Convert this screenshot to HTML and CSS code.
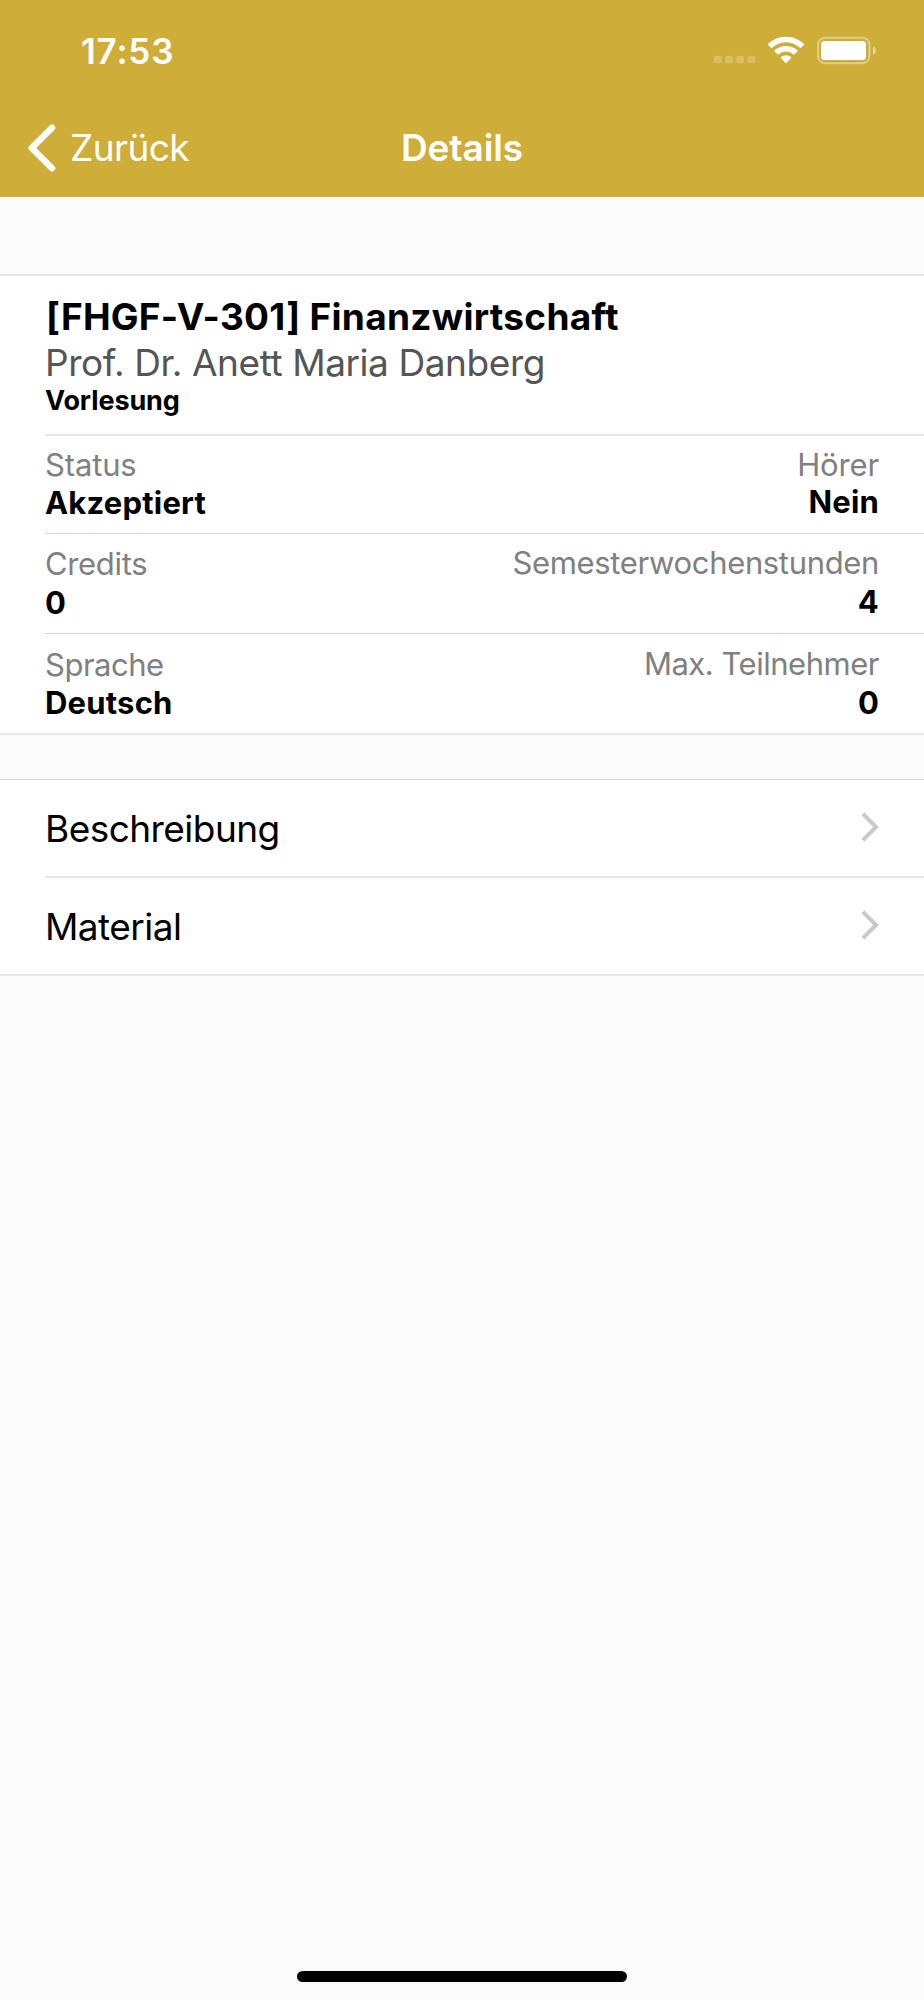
FILE: index.html
```html
<!DOCTYPE html>
<html lang="de">
<head>
<meta charset="utf-8">
<title>Details</title>
<link rel="stylesheet" href="styles.css">
</head>
<body>
<div class="screen">
  <header class="header">
    <div class="statusbar">
      <span class="time">17:53</span>
      <svg class="indicators" width="164" height="30" viewBox="0 0 164 30">
        <g fill="#fff" fill-opacity="0.22">
          <rect x="2" y="20.7" width="7.8" height="7.6" rx="2"/>
          <rect x="13" y="20.7" width="7.8" height="7.6" rx="2"/>
          <rect x="24.2" y="20.7" width="7.8" height="7.6" rx="2"/>
          <rect x="35.4" y="20.7" width="7.8" height="7.6" rx="2"/>
        </g>
        <g fill="#fff">
          <path d="M74 1.7C81 1.7 87.400 4.500 91.800 8.700Q92.400 9.400 91.800 10L89 12.800Q88.400 13.300 87.800 12.800C84.200 9.400 79.300 7.300 74 7.300S63.800 9.400 60.200 12.800Q59.600 13.300 59 12.800L56.200 10Q55.600 9.400 56.200 8.700C60.600 4.500 67 1.700 74 1.700Z"/>
          <path d="M74 10.900C78.500 10.900 82.500 12.600 85.400 15.300Q86 15.900 85.400 16.500L82.500 19.300Q81.900 19.800 81.300 19.300C79.400 17.500 76.800 16.400 74 16.400S68.600 17.500 66.700 19.300Q66.100 19.800 65.500 19.300L62.600 16.500Q62 15.900 62.600 15.300C65.500 12.600 69.500 10.900 74 10.900Z"/>
          <path d="M74 20.200C76 20.200 77.700 20.900 79 22Q79.500 22.500 79 23.100L74.500 27.900Q74 28.400 73.500 27.900L69 23.100Q68.500 22.500 69 22C70.300 20.900 72 20.200 74 20.200Z"/>
          <rect x="109" y="6" width="45" height="19" rx="3.500"/>
          <path fill-opacity="0.5" d="M161 11.300Q164 12.700 164 15.500T161 19.700Z"/>
        </g>
        <rect x="106" y="2.700" width="51.500" height="25.500" rx="7" fill="none" stroke="#fff" stroke-opacity="0.4" stroke-width="2"/>
      </svg>
    </div>
    <nav class="navbar">
      <a class="back">
        <svg width="28" height="48" viewBox="0 0 28 48"><path d="M24 3.700L3.700 24L24 44.300" fill="none" stroke="#fff" stroke-width="6.400" stroke-linecap="round" stroke-linejoin="round"/></svg>
        <span>Zurück</span>
      </a>
      <h1 class="nav-title">Details</h1>
    </nav>
  </header>

  <main class="content">
    <section class="group course">
      <div class="course-head">
        <h2 class="course-title">[FHGF-V-301] Finanzwirtschaft</h2>
        <p class="lecturer">Prof. Dr. Anett Maria Danberg</p>
        <p class="kind">Vorlesung</p>
      </div>
      <dl class="facts status">
        <div class="fact"><dt>Status</dt><dd>Akzeptiert</dd></div>
        <div class="fact end"><dt>Hörer</dt><dd>Nein</dd></div>
      </dl>
      <dl class="facts credits">
        <div class="fact"><dt>Credits</dt><dd>0</dd></div>
        <div class="fact end"><dt>Semesterwochenstunden</dt><dd>4</dd></div>
      </dl>
      <dl class="facts language">
        <div class="fact"><dt>Sprache</dt><dd>Deutsch</dd></div>
        <div class="fact end"><dt>Max. Teilnehmer</dt><dd>0</dd></div>
      </dl>
    </section>

    <section class="group links">
      <a class="link"><span>Beschreibung</span>
        <svg width="18" height="30" viewBox="0 0 18 30"><path d="M2 1.800L15 15L2 28.200" fill="none" stroke="#c7c7cc" stroke-width="4"/></svg>
      </a>
      <a class="link material"><span>Material</span>
        <svg width="18" height="30" viewBox="0 0 18 30"><path d="M2 1.800L15 15L2 28.200" fill="none" stroke="#c7c7cc" stroke-width="4"/></svg>
      </a>
    </section>
  </main>
  <div class="home-indicator"></div>
</div>
</body>
</html>
```

FILE: styles.css
```css
* { box-sizing: border-box; }

body {
  margin: 0;
  background: #fbfbfb;
  color: #000;
  font-family: Inter, "Liberation Sans", sans-serif;
}

h1, h2, p, dl, dd { margin: 0; }

.screen {
  display: flex;
  flex-direction: column;
  align-items: stretch;
  width: 924px;
  height: 2000px;
  padding-bottom: 18px;
  background: #fbfbfb;
}

.header {
  height: 197px;
  background: #cead38;
  color: #fff;
}

.statusbar {
  display: flex;
  justify-content: space-between;
  height: 98px;
  padding: 30px 48px 0 81px;
}

.time {
  font-size: 35px;
  font-weight: 600;
  line-height: 42px;
  letter-spacing: 0.8px;
}

.indicators { margin-top: 5px; }

.navbar {
  display: grid;
  grid-template-columns: 1fr auto 1fr;
  align-items: center;
  height: 98px;
  padding: 2px 28px 0;
}

.back {
  display: flex;
  align-items: center;
  gap: 14px;
  font-size: 37px;
  font-weight: 400;
  line-height: 46px;
  letter-spacing: -0.55px;
}

.nav-title {
  font-size: 37px;
  font-weight: 600;
  line-height: 46px;
  letter-spacing: -0.08px;
}

.content {
  display: flex;
  flex-direction: column;
  gap: 44px;
  padding-top: 77px;
}

.group {
  background: #fff;
  border-bottom: 2px solid #e7e7e7;
  padding-left: 45px;
}

.course { border-top: 2px solid #e7e7e7; }

.course-head {
  height: 158px;
  padding-top: 18px;
}

.course-title {
  padding-left: 1px;
  font-size: 37px;
  font-weight: 700;
  line-height: 46px;
  letter-spacing: 0.28px;
}

.lecturer {
  color: #555;
  font-size: 37px;
  line-height: 46px;
  letter-spacing: -0.42px;
}

.kind {
  font-size: 27px;
  font-weight: 700;
  line-height: 30px;
  letter-spacing: -0.1px;
}

.facts {
  display: flex;
  justify-content: space-between;
  padding-right: 45px;
  font-size: 31px;
}

.facts dt {
  color: #808080;
  line-height: 38px;
  letter-spacing: -0.34px;
}

.facts dd {
  font-weight: 700;
  line-height: 38px;
  letter-spacing: 0.2px;
}

.end { text-align: right; }

.status {
  height: 99px;
  padding-top: 10px;
  border-top: 2px solid #e7e7e7;
}

.status dt { letter-spacing: -0.15px; }
.status .end dd { line-height: 36px; }

.credits {
  height: 100px;
  padding-top: 11px;
  border-top: 1px solid #d6d6d6;
}

.credits dd { line-height: 40px; }
.credits .end { margin-top: -1px; }

.language {
  height: 100px;
  padding-top: 12px;
  border-top: 1px solid #d6d6d6;
}

.language dt { letter-spacing: -0.48px; }
.language .end { margin-top: -1px; }
.language .end dd { line-height: 40px; }

.links { border-top: 1px solid #d6d6d6; }

.link {
  display: flex;
  align-items: center;
  justify-content: space-between;
  height: 96px;
  padding: 1px 45px 0 0;
  font-size: 37px;
  line-height: 46px;
  letter-spacing: -0.55px;
}

.link svg { margin-bottom: 3px; }

.material {
  height: 98px;
  border-top: 2px solid #e7e7e7;
}

.home-indicator {
  width: 330px;
  height: 11px;
  margin: auto auto 0;
  border-radius: 6px;
  background: #000;
}
```
